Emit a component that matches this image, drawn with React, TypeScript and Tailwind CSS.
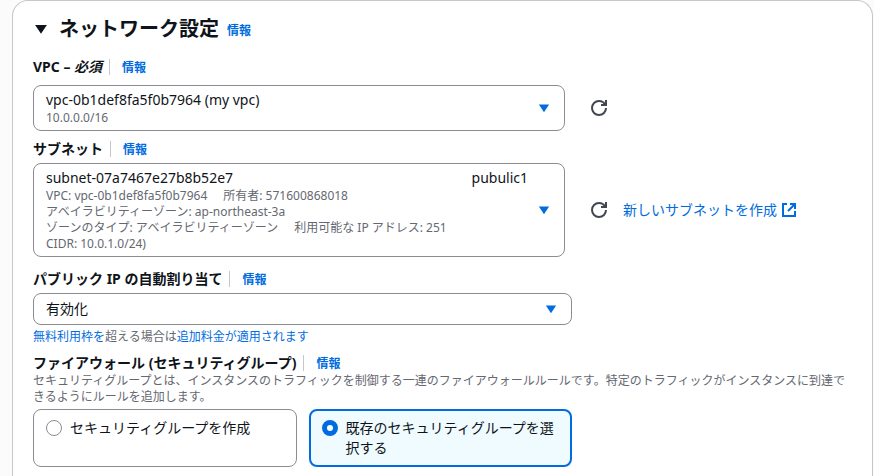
import { useState, type ReactNode } from "react";

function InfoLink() {
  return (
    <a href="#info" className="text-xs font-bold leading-5 text-[#006ce0]">
      情報
    </a>
  );
}

function FieldLabel({ id, htmlFor, children }: { id: string; htmlFor?: string; children: ReactNode }) {
  return (
    <div className="flex h-5 items-center">
      <label id={id} htmlFor={htmlFor} className="text-sm font-bold leading-5">
        {children}
      </label>
      <span className="ml-[7px] mr-3 h-4 w-px bg-[#c6c6cd]" />
      <span className="flex pt-0.5">
        <InfoLink />
      </span>
    </div>
  );
}

function Caret({ className }: { className: string }) {
  return (
    <svg viewBox="0 0 16 16" className={className} fill="currentColor" stroke="currentColor" strokeWidth="2" aria-hidden="true">
      <path d="M4 5h8l-4 6-4-6Z" />
    </svg>
  );
}

function RefreshButton({ label }: { label: string }) {
  return (
    <button type="button" aria-label={label} className="text-[#424650]">
      <svg viewBox="0 0 16 16" className="size-4" fill="none" stroke="currentColor" strokeWidth="2" aria-hidden="true">
        <path d="M15 8c0 3.87-3.13 7-7 7s-7-3.13-7-7 3.13-7 7-7c2.79 0 5.2 1.63 6.33 4" />
        <path d="M10 5h5V0" />
      </svg>
    </button>
  );
}

function Picker({ labelledBy, children }: { labelledBy: string; children: ReactNode }) {
  return (
    <button
      type="button"
      aria-haspopup="listbox"
      aria-labelledby={labelledBy}
      className="flex flex-1 items-center rounded-lg border border-[#8c8c94] bg-white px-3 py-1 text-left"
    >
      <span className="min-w-0 flex-1 text-xs leading-4 text-[#656871]">{children}</span>
      <Caret className="h-3.5 w-4 text-[#006ce0]" />
    </button>
  );
}

function Tile({ value, checked, onSelect, children }: { value: string; checked: boolean; onSelect: () => void; children: ReactNode }) {
  return (
    <label
      className={`flex flex-1 items-start gap-2 rounded-lg text-sm leading-5 ${
        checked ? "border-2 border-[#006ce0] bg-[#f0fbff] px-[11px] py-[7px]" : "border border-[#8c8c94] bg-white px-3 py-2"
      }`}
    >
      <input
        type="radio"
        name="firewall"
        value={value}
        checked={checked}
        onChange={onSelect}
        className="mt-[2px] size-4 shrink-0 appearance-none rounded-full border border-[#8c8c94] bg-white checked:border-5 checked:border-[#006ce0]"
      />
      <span className="min-h-10">{children}</span>
    </label>
  );
}

export default function App() {
  const [firewall, setFirewall] = useState("existing");
  return (
    <main
      lang="ja"
      className="min-h-screen bg-[#fbfbfb] pl-3 pr-px font-['Noto_Sans','Noto_Sans_CJK_JP',sans-serif] text-[#0f141a]"
    >
      <section className="min-h-screen rounded-t-2xl border border-b-0 border-[#c6c6cd] bg-white px-5 pb-2 pt-3">
        <header className="flex h-8 items-center">
          <button type="button" aria-label="ネットワーク設定を折りたたむ" className="mr-[10px]">
            <Caret className="size-4" />
          </button>
          <h2 className="text-xl font-bold leading-8">ネットワーク設定</h2>
          <span className="ml-2 mt-1 flex">
            <InfoLink />
          </span>
        </header>

        <div className="mt-3">
          <FieldLabel id="vpc-label">
            VPC – <i>必須</i>
          </FieldLabel>
          <div className="mt-2 flex items-center">
            <Picker labelledBy="vpc-label">
              <span className="block text-sm leading-5 text-[#0f141a]">vpc-0b1def8fa5f0b7964 (my vpc)</span>
              <span className="block">10.0.0.0/16</span>
            </Picker>
            <div className="flex w-[287px] items-center pl-[26px]">
              <RefreshButton label="VPC を更新" />
            </div>
          </div>
        </div>

        <div className="mt-2">
          <FieldLabel id="subnet-label">サブネット</FieldLabel>
          <div className="mt-1 flex items-center">
            <Picker labelledBy="subnet-label">
              <span className="flex justify-between pr-2 text-sm leading-5 text-[#0f141a]">
                <span>subnet-07a7467e27b8b52e7</span>
                <span>pubulic1</span>
              </span>
              <span className="flex gap-4">
                <span>VPC: vpc-0b1def8fa5f0b7964</span>
                <span>所有者: 571600868018</span>
              </span>
              <span className="block">アベイラビリティーゾーン: ap-northeast-3a</span>
              <span className="flex gap-4">
                <span>ゾーンのタイプ: アベイラビリティーゾーン</span>
                <span>利用可能な IP アドレス: 251</span>
              </span>
              <span className="block">CIDR: 10.0.1.0/24)</span>
            </Picker>
            <div className="flex w-[287px] items-center gap-4 pl-[26px]">
              <RefreshButton label="サブネットを更新" />
              <a href="#create-subnet" className="flex items-center gap-1 text-sm leading-5 text-[#006ce0]">
                新しいサブネットを作成
                <svg viewBox="0 0 16 16" className="size-4" fill="none" stroke="currentColor" strokeWidth="2" aria-hidden="true">
                  <path d="M9 2h5v5M7 9l7-7" />
                  <path d="M14 9v5H2V2h4" />
                </svg>
              </a>
            </div>
          </div>
        </div>

        <div className="mt-3">
          <FieldLabel id="ip-label" htmlFor="public-ip">
            パブリック IP の自動割り当て
          </FieldLabel>
          <div className="mr-[280px] mt-1 grid items-center">
            <select
              id="public-ip"
              className="col-start-1 row-start-1 h-8 w-full appearance-none rounded-lg border border-[#8c8c94] bg-white px-3 text-sm leading-5"
            >
              <option>有効化</option>
              <option>無効化</option>
            </select>
            <Caret className="pointer-events-none col-start-1 row-start-1 mr-[13px] h-3.5 w-4 justify-self-end text-[#006ce0]" />
          </div>
          <p className="mt-1 text-xs leading-4 text-[#656871]">
            <a href="#free-tier" className="text-[#006ce0]">無料利用枠を</a>
            超える場合は
            <a href="#charges" className="text-[#006ce0]">追加料金が適用されます</a>
          </p>
        </div>

        <div className="mt-2" role="radiogroup" aria-labelledby="firewall-label">
          <FieldLabel id="firewall-label">ファイアウォール (セキュリティグループ)</FieldLabel>
          <p className="text-xs leading-4 text-[#656871]">
            セキュリティグループとは、インスタンスのトラフィックを制御する一連のファイアウォールルールです。特定のトラフィックがインスタンスに到達できるようにルールを追加します。
          </p>
          <div className="mr-[280px] mt-1 flex gap-3">
            <Tile value="create" checked={firewall === "create"} onSelect={() => setFirewall("create")}>
              セキュリティグループを作成
            </Tile>
            <Tile value="existing" checked={firewall === "existing"} onSelect={() => setFirewall("existing")}>
              既存のセキュリティグループを選択する
            </Tile>
          </div>
        </div>
      </section>
    </main>
  );
}
